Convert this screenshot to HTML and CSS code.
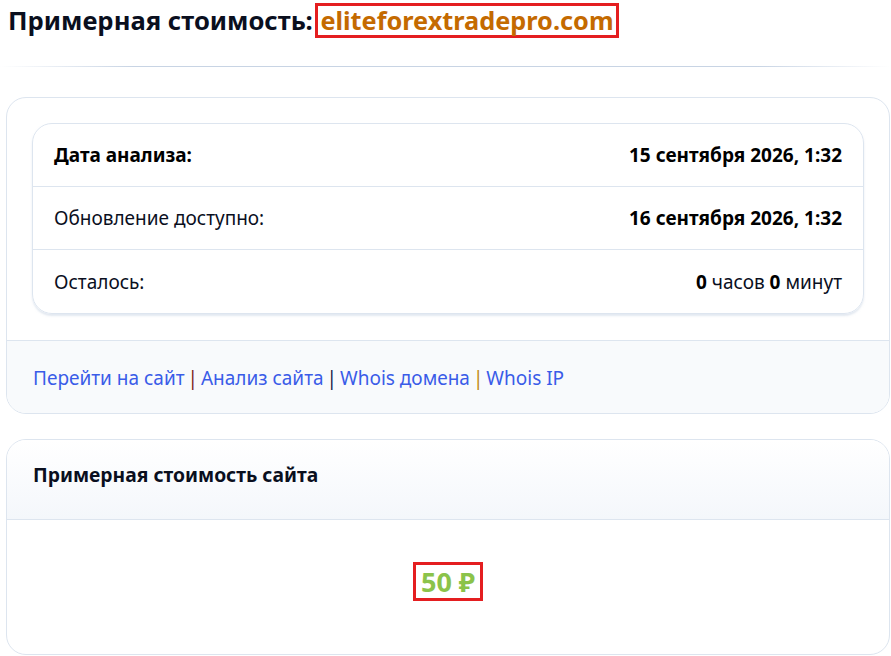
FILE: index.html
```html
<!DOCTYPE html>
<html lang="ru">
<head>
<meta charset="utf-8">
<title>Примерная стоимость</title>
<link rel="stylesheet" href="styles.css">
</head>
<body>
<h1 class="title">Примерная стоимость: <span class="domain">eliteforextradepro.com</span></h1>
<div class="divider"></div>
<section class="card">
  <div class="card-body">
    <div class="table">
      <div class="row"><span class="label strong">Дата анализа:</span><span class="value strong">15 сентября 2026, 1:32</span></div>
      <div class="row"><span class="label">Обновление доступно:</span><span class="value strong">16 сентября 2026, 1:32</span></div>
      <div class="row row-last"><span class="label">Осталось:</span><span class="value"><b>0</b> часов <b>0</b> минут</span></div>
    </div>
  </div>
  <div class="card-footer">
    <div class="links"><a href="#" class="link">Перейти на сайт</a> <span class="sep sep1">|</span> <a href="#" class="link">Анализ сайта</a> <span class="sep sep2">|</span> <a href="#" class="link">Whois домена</a> <span class="sep sep3">|</span> <a href="#" class="link">Whois IP</a></div>
  </div>
</section>
<section class="card card2">
  <div class="card-header">Примерная стоимость сайта</div>
  <div class="price-body"><span class="price">50 ₽</span></div>
</section>
</body>
</html>
```
FILE: styles.css
```css
html, body {
  margin: 0;
  padding: 0;
  background: #fff;
}
body {
  font-family: "Noto Sans", "Open Sans", sans-serif;
  color: #000;
  padding: 0 1px 0 6px;
  overflow: hidden;
}
.title {
  margin: 0;
  padding: 3px 0 0 2px;
  font-size: 25.6px;
  font-weight: 700;
  color: #0a0f1e;
  line-height: 35px;
  height: 35px;
  white-space: nowrap;
}
.domain {
  display: inline-block;
  margin-left: -4px;
  color: #c46a00;
  font-size: 25.3px;
  border: 3px solid #e41e20;
  padding: 0 2px 0 2px;
  line-height: 29px;
  height: 29px;
  vertical-align: top;
}
.divider {
  height: 1px;
  margin: 28px 0 30px -6px;
  background: linear-gradient(to right, rgba(200,212,228,0) 0%, #c8d4e4 15%, #c8d4e4 85%, rgba(200,212,228,0) 100%);
}
.card {
  border: 1px solid #dde5ef;
  border-radius: 20px;
  overflow: hidden;
  background: #fff;
}
.card-body {
  padding: 25px 25px 26px 25px;
}
.table {
  border: 1px solid #dde5ef;
  border-radius: 20px;
  box-shadow: 0 2px 2px rgba(200, 212, 228, 0.5);
}
.row {
  display: flex;
  justify-content: space-between;
  align-items: center;
  height: 62px;
  padding: 0 21px;
  font-size: 19px;
  color: #0a0f1e;
}
.row-last {
  height: 63px;
}
.row + .row {
  border-top: 1px solid #dde5ef;
}
.strong {
  font-weight: 700;
  color: #000;
}
.value b {
  font-weight: 700;
  color: #000;
}
.card-footer {
  background: #f8fafc;
  border-top: 1px solid #dde5ef;
  display: flex;
  align-items: center;
  padding: 2px 26px 0;
  box-sizing: border-box;
  height: 73px;
  font-size: 19px;
}
.link {
  color: #3a5ce8;
  text-decoration: none;
}
.sep {
  margin: 0 -2px;
}
.sep1 { color: #7a1c1c; }
.sep2 { color: #15204a; }
.sep3 { color: #c08a10; }
.card2 {
  margin-top: 25px;
}
.card-header {
  height: 80px;
  box-sizing: border-box;
  display: flex;
  align-items: center;
  padding: 0 26px 10px;
  font-size: 19.3px;
  font-weight: 700;
  color: #0a0f1e;
  background: linear-gradient(to bottom, #ffffff, #f4f7fb);
  border-bottom: 1px solid #dde5ef;
}
.price-body {
  height: 134px;
  box-sizing: border-box;
  display: flex;
  align-items: center;
  justify-content: center;
  padding-bottom: 12px;
}
.price {
  display: inline-block;
  color: #8bc34a;
  font-size: 27px;
  font-weight: 700;
  border: 3px solid #e41e20;
  padding: 0 5px;
  line-height: 33px;
}
```
